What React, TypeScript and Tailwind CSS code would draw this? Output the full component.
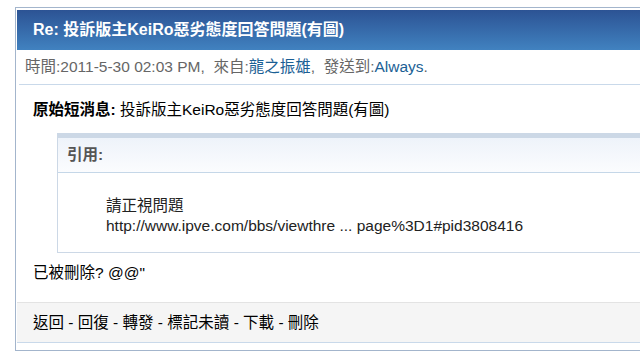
export default function App() {
  const font = { fontFamily: '"Liberation Sans", "Noto Sans CJK TC", sans-serif' };

  return (
    <div className="w-[640px] h-[360px] overflow-hidden bg-white" style={font}>
      <div className="ml-[15px] mt-[7px] w-[700px] h-[344px] border border-[#a3b5cc] pt-[2px] pl-[1px]">

        {/* HEADER */}
        <div className="h-[40px] flex items-center pl-[16px] bg-gradient-to-b from-[#2c5394] to-[#4182c0]">
          <span className="text-[16px] font-bold text-white">Re: 投訴版主KeiRo惡劣態度回答問題(有圖)</span>
        </div>

        {/* META */}
        <div className="h-[34px] flex items-center pl-[8px] text-[15.5px] text-[#666]">
          時間:2011-5-30 02:03 PM,&nbsp; 來自:<span className="text-[#1b5f95]">龍之振雄</span>,&nbsp; 發送到:<span className="text-[#1b5f95]">Always</span>.
        </div>
        <div className="ml-[2px] h-px bg-[#c9d9ea]" />

        {/* BODY */}
        <div className="pl-[16px] pt-[15px]">
          <p className="text-[15.5px] text-black leading-[20px]">
            <span className="font-bold">原始短消息:</span> 投訴版主KeiRo惡劣態度回答問題(有圖)
          </p>

          <div className="mt-[13px] ml-[24px] border border-t-[5px] border-[#ccd8e6]">
            <div className="h-[35px] flex items-center pl-[9px] bg-gradient-to-b from-[#eef3fa] to-[#fbfcfe] border-b border-[#c5d7e8]">
              <span className="text-[15.5px] font-bold text-[#555]">引用:</span>
            </div>
            <div className="pl-[48px] pt-[23px] pb-[16px] text-[15.5px] text-[#222] leading-[20px]">
              <p>請正視問題</p>
              <p>http://www.ipve.com/bbs/viewthre ... page%3D1#pid3808416</p>
            </div>
          </div>

          <p className="mt-[10px] text-[15.5px] text-black leading-[20px]">已被刪除? @@"</p>
        </div>

        {/* FOOTER */}
        <div className="mt-[19px] h-[41px] flex items-center pl-[16px] bg-[#f5f5f5] border-t border-[#e3e3e3] border-b border-b-[#c9d9ea] text-[15.5px] text-black">
          返回 - 回復 - 轉發 - 標記未讀 - 下載 - 刪除
        </div>
      </div>
    </div>
  );
}
